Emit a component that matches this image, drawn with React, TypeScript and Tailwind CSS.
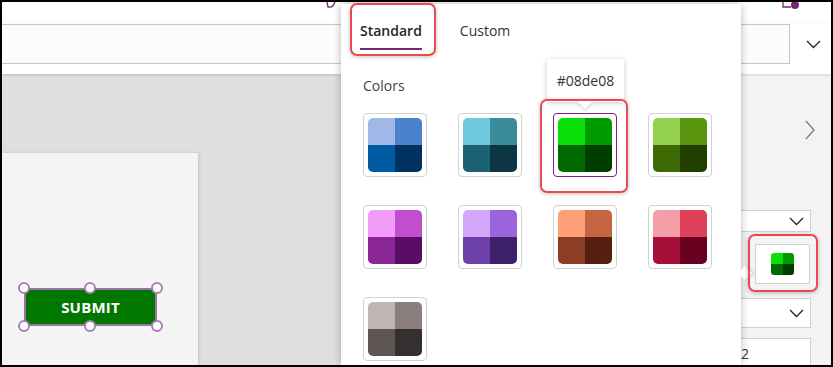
import clsx from 'clsx';

const swatches = [
  { id: 'blue', cells: ['bg-[#9fb8e8]', 'bg-[#4a83cc]', 'bg-[#005aa1]', 'bg-[#00325f]'] },
  { id: 'teal', cells: ['bg-[#70c8de]', 'bg-[#3a8c9b]', 'bg-[#1d6272]', 'bg-[#0c3541]'] },
  { id: 'green', cells: ['bg-[#08de08]', 'bg-[#009b00]', 'bg-[#006a00]', 'bg-[#003e00]'], selected: true },
  { id: 'lime', cells: ['bg-[#92d04e]', 'bg-[#5a9510]', 'bg-[#3e6a06]', 'bg-[#233f00]'] },
  { id: 'pink', cells: ['bg-[#f29cf9]', 'bg-[#c04ece]', 'bg-[#8a2597]', 'bg-[#5a0d64]'] },
  { id: 'purple', cells: ['bg-[#d3a8fb]', 'bg-[#9b63de]', 'bg-[#6c40a8]', 'bg-[#3e1f69]'] },
  { id: 'orange', cells: ['bg-[#ff9f78]', 'bg-[#c66541]', 'bg-[#8c3e25]', 'bg-[#55200f]'] },
  { id: 'red', cells: ['bg-[#f69ea7]', 'bg-[#de3f59]', 'bg-[#a60f39]', 'bg-[#690020]'] },
  { id: 'gray', cells: ['bg-[#c0b5b3]', 'bg-[#8a7f7e]', 'bg-[#5e5655]', 'bg-[#353030]'] },
];

function Chevron({ className }: { className?: string }) {
  return (
    <svg width="15" height="9" viewBox="0 0 15 9" className={className}>
      <polyline points="1,1 7.5,7.5 14,1" fill="none" stroke="#222" strokeWidth="1.3" />
    </svg>
  );
}

function Swatch({ cells, selected }: { cells: string[]; selected?: boolean }) {
  return (
    <div
      className={clsx(
        'w-[64px] h-[64px] rounded-[4px] border bg-white p-[4px]',
        selected ? 'border-[#742774]' : 'border-[#d2d2d2]'
      )}
    >
      <div className="grid grid-cols-2 grid-rows-2 w-full h-full rounded-[5px] overflow-hidden">
        {cells.map((c, i) => (
          <div key={i} className={c} />
        ))}
      </div>
    </div>
  );
}

function Handle({ className }: { className: string }) {
  return <div className={clsx('absolute w-[12px] h-[12px] rounded-full bg-white border-2 border-[#a97fb5]', className)} />;
}

export default function App() {
  return (
    <div className="w-[833px] h-[367px] bg-black p-[2px] font-['Open_Sans',sans-serif]">
      <div className="relative w-full h-full overflow-hidden bg-white flex flex-col">
        {/* top command bar, mostly cut off */}
        <div className="h-[22px] bg-white flex items-start shrink-0">
          <svg width="10" height="6" viewBox="0 0 10 6" className="ml-[324px]">
            <path d="M1 0 L2 5 Q7 6 9 0" fill="none" stroke="#742774" strokeWidth="1.3" />
          </svg>
          <svg width="20" height="8" viewBox="0 0 20 8" className="ml-[446px]">
            <path d="M1 0 V5 H9" fill="none" stroke="#742774" strokeWidth="1.3" />
            <circle cx="13" cy="3" r="4" fill="#742774" />
          </svg>
        </div>

        {/* formula / property row */}
        <div className="h-[50px] bg-white flex items-start shrink-0 relative z-10 shadow-[0_1px_3px_rgba(0,0,0,0.14)]">
          <div className="w-[788px] h-[40px] border-y border-r border-[#c6c6c6] bg-[#fcfcfb]" />
          <Chevron className="ml-[16px] mt-[16px]" />
        </div>

        {/* body */}
        <div className="flex-1 flex min-h-0">
          <div className="w-[739px] bg-[#dfdfdf] pt-[79px]">
            <div className="w-[196px] h-full bg-[#f4f4f4] shadow-[1px_0_3px_rgba(0,0,0,0.12)] pl-[22px] pt-[135px]">
              <div className="relative w-[133px] h-[38px]">
                <button className="w-full h-full bg-[#007800] border-2 border-[#9c73a9] text-white font-bold text-[15px] tracking-[0.2px]">
                  SUBMIT
                </button>
                <Handle className="-left-[6px] -top-[6px]" />
                <Handle className="left-[60px] -top-[6px]" />
                <Handle className="-right-[6px] -top-[6px]" />
                <Handle className="-left-[6px] -bottom-[6px]" />
                <Handle className="left-[60px] -bottom-[6px]" />
                <Handle className="-right-[6px] -bottom-[6px]" />
              </div>
            </div>
          </div>

          {/* right properties panel */}
          <div className="flex-1 bg-[#f3f3f3] flex flex-col">
            <svg width="10" height="20" viewBox="0 0 10 20" className="ml-[64px] mt-[46px] shrink-0">
              <polyline points="1,1 9,10 1,19" fill="none" stroke="#777" strokeWidth="1.2" />
            </svg>
            <div className="mt-[70px] w-[70px] h-[22px] bg-white border-y border-r border-[#d0d0d0] flex items-center justify-end pr-[6px] shrink-0">
              <Chevron />
            </div>
            <div className="mt-[12px] ml-[14px] w-[55px] h-[40px] bg-white border border-[#cfcfcf] rounded-[2px] flex items-center justify-center shrink-0">
              <div className="grid grid-cols-2 grid-rows-2 w-[23px] h-[22px] rounded-[3px] overflow-hidden">
                <div className="bg-[#08de08]" />
                <div className="bg-[#009b00]" />
                <div className="bg-[#006a00]" />
                <div className="bg-[#003e00]" />
              </div>
            </div>
            <div className="mt-[14px] w-[70px] h-[30px] bg-white border-y border-r border-[#d0d0d0] flex items-center justify-end pr-[6px] shrink-0">
              <Chevron />
            </div>
            <div className="mt-[10px] w-[70px] flex-1 bg-white border-t border-r border-[#d0d0d0] pt-[5px] text-[14px] leading-[20px] text-[#333]">
              2
            </div>
          </div>
        </div>

        {/* color picker flyout */}
        <div className="absolute left-[339px] top-[2px] bottom-0 w-[400px] bg-white shadow-[0_0_8px_rgba(0,0,0,0.28)] z-20">
          <div className="absolute left-[399px] top-[264px] w-[10px] h-[10px] rotate-45 bg-white shadow-[2px_-2px_3px_rgba(0,0,0,0.12)]" />

          <div className="flex items-start h-[46px] pl-[19px] gap-[38px]">
            <div className="pt-[17px] pb-[7px] border-b-2 border-[#742774] text-[14px] leading-[20px] font-semibold text-[#252525]">
              Standard
            </div>
            <div className="pt-[17px] text-[14px] leading-[20px] text-[#333]">Custom</div>
          </div>

          <div className="pl-[22px]">
            <div className="mt-[26px] text-[14px] leading-[20px] text-[#444]">Colors</div>
            <div className="mt-[17px] grid grid-cols-[repeat(4,64px)] gap-x-[31px] gap-y-[28px]">
              {swatches.map((s) => (
                <Swatch key={s.id} cells={s.cells} selected={s.selected} />
              ))}
            </div>
          </div>

          {/* tooltip */}
          <div className="absolute left-[206px] top-[55px] w-[77px] h-[43px] bg-white shadow-[0_1px_5px_rgba(0,0,0,0.22)] flex items-center justify-center text-[14px] text-[#333]">
            #08de08
            <div className="absolute left-[33px] -bottom-[5px] w-[10px] h-[10px] rotate-45 bg-white shadow-[2px_2px_2px_rgba(0,0,0,0.1)]" />
          </div>

          {/* callout highlights */}
          <div className="absolute left-[9px] -top-[1px] w-[86px] h-[53px] rounded-[7px] border-2 border-[#ea4a4f] shadow-[0_1px_4px_rgba(0,0,0,0.25)]" />
          <div className="absolute left-[199px] top-[95px] w-[88px] h-[94px] rounded-[7px] border-2 border-[#ea4a4f] shadow-[0_1px_4px_rgba(0,0,0,0.25)]" />
        </div>

        <div className="absolute left-[746px] top-[232px] w-[70px] h-[58px] rounded-[7px] border-2 border-[#ea4a4f] shadow-[0_1px_4px_rgba(0,0,0,0.25)] z-30" />
      </div>
    </div>
  );
}
